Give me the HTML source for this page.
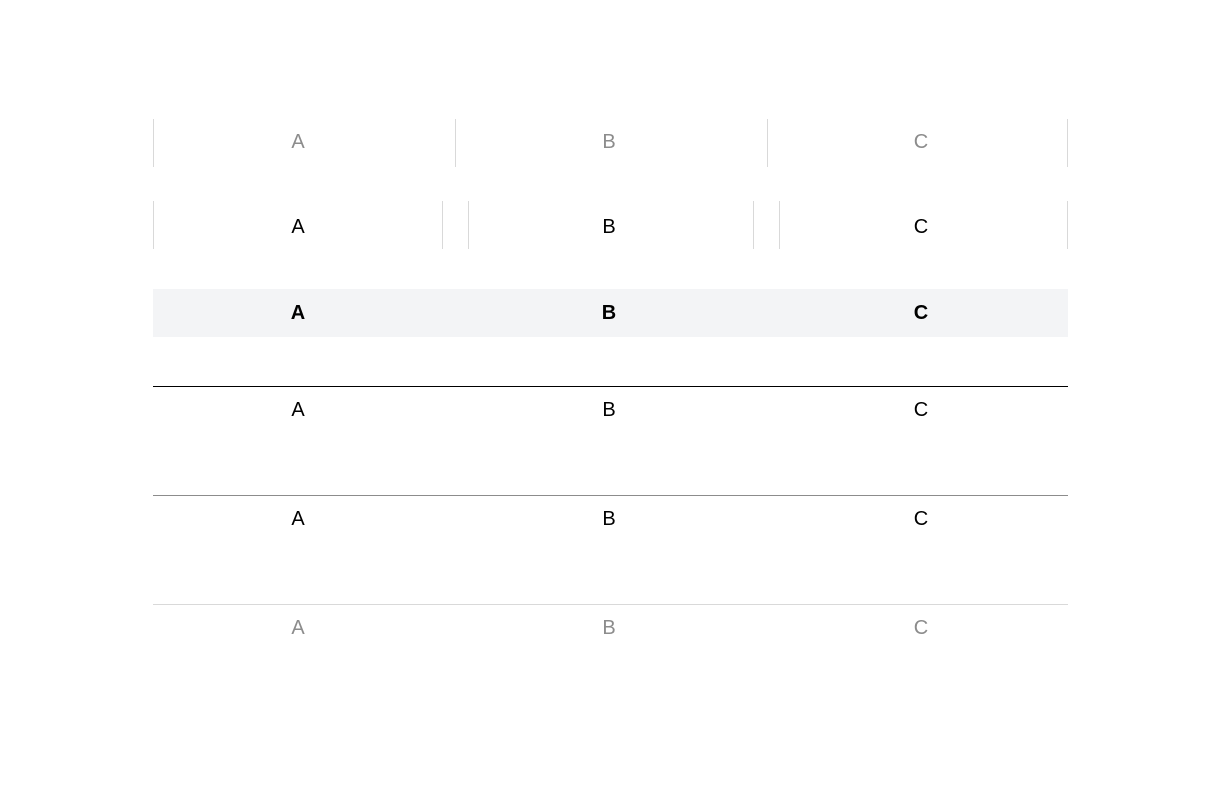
<!DOCTYPE html>
<html><head><style>
body{margin:0;width:1225px;height:792px;background:#fff;position:relative;font-family:"Liberation Sans",sans-serif;font-size:20px;overflow:hidden}
.t{position:absolute;width:60px;margin-left:-30px;text-align:center;line-height:24px}
.v{position:absolute;width:1px;background:#d9d9d9}
.h{position:absolute;left:153px;width:915px;height:1px}
.g{color:#8c8c8c}
</style></head><body>
<!-- row1 -->
<div class="v" style="left:153px;top:119px;height:48px"></div>
<div class="v" style="left:455px;top:119px;height:48px"></div>
<div class="v" style="left:767px;top:119px;height:48px"></div>
<div class="v" style="left:1067px;top:119px;height:48px"></div>
<div class="t g" style="left:298px;top:130px">A</div>
<div class="t g" style="left:609px;top:130px">B</div>
<div class="t g" style="left:921px;top:130px">C</div>
<!-- row2 -->
<div class="v" style="left:153px;top:201px;height:48px"></div>
<div class="v" style="left:442px;top:201px;height:48px"></div>
<div class="v" style="left:468px;top:201px;height:48px"></div>
<div class="v" style="left:753px;top:201px;height:48px"></div>
<div class="v" style="left:779px;top:201px;height:48px"></div>
<div class="v" style="left:1067px;top:201px;height:48px"></div>
<div class="t" style="left:298px;top:215px">A</div>
<div class="t" style="left:609px;top:215px">B</div>
<div class="t" style="left:921px;top:215px">C</div>
<!-- row3 -->
<div style="position:absolute;left:153px;top:289px;width:915px;height:48px;background:#f3f4f6"></div>
<div class="t" style="left:298px;top:301px;font-weight:bold">A</div>
<div class="t" style="left:609px;top:301px;font-weight:bold">B</div>
<div class="t" style="left:921px;top:301px;font-weight:bold">C</div>
<!-- row4 -->
<div class="h" style="top:386px;background:#000"></div>
<div class="t" style="left:298px;top:398px">A</div>
<div class="t" style="left:609px;top:398px">B</div>
<div class="t" style="left:921px;top:398px">C</div>
<!-- row5 -->
<div class="h" style="top:495px;background:#8c8c8c"></div>
<div class="t" style="left:298px;top:507px">A</div>
<div class="t" style="left:609px;top:507px">B</div>
<div class="t" style="left:921px;top:507px">C</div>
<!-- row6 -->
<div class="h" style="top:604px;background:#d9d9d9"></div>
<div class="t g" style="left:298px;top:616px">A</div>
<div class="t g" style="left:609px;top:616px">B</div>
<div class="t g" style="left:921px;top:616px">C</div>
</body></html>
